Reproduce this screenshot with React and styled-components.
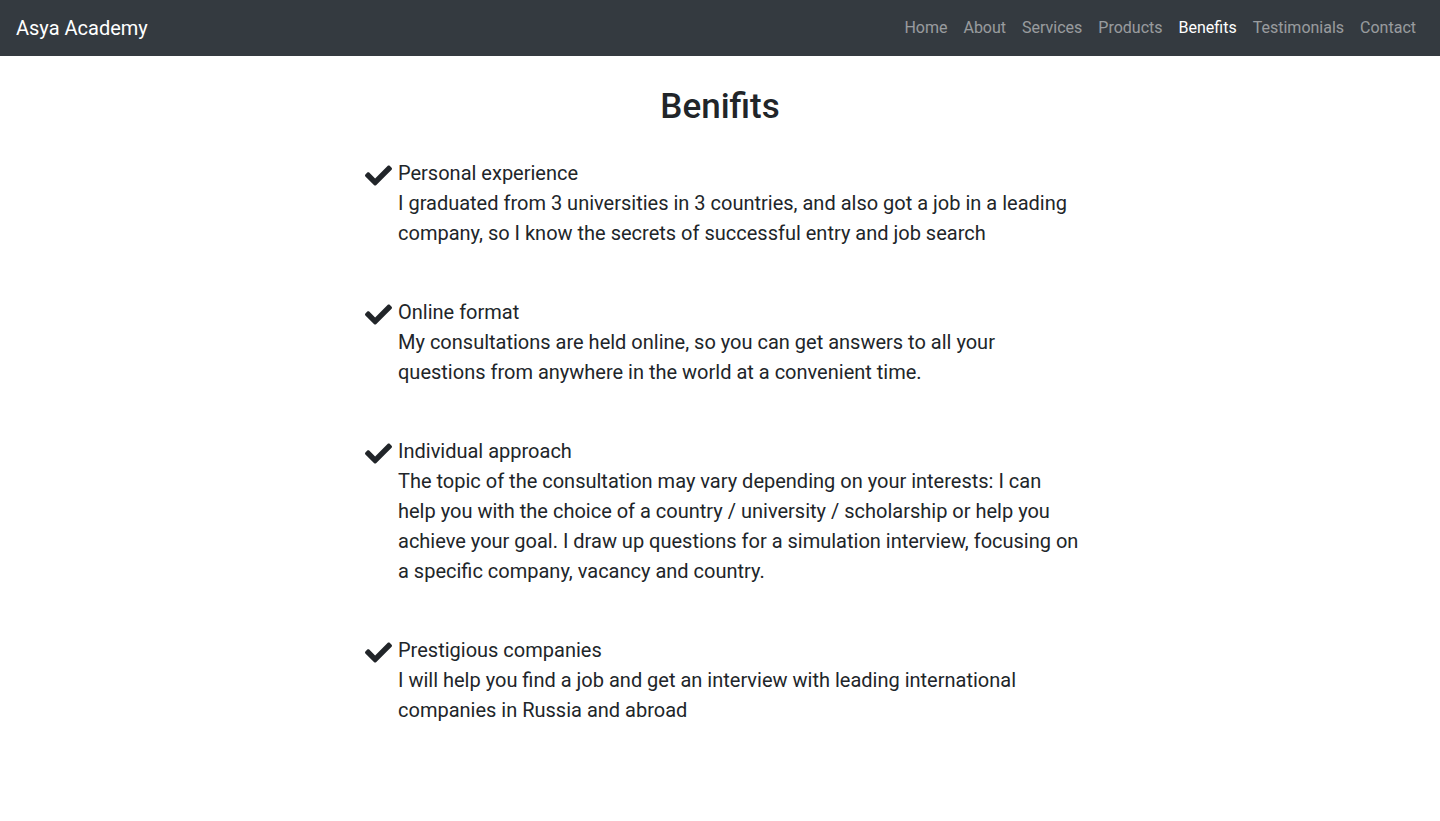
import React from 'react';
import styled, { createGlobalStyle } from 'styled-components';
import { FaCheck } from 'react-icons/fa';

const GlobalStyle = createGlobalStyle`
  * {
    box-sizing: border-box;
  }

  body {
    margin: 0;
    font-family: Roboto, "Liberation Sans", sans-serif;
    font-size: 16px;
    line-height: 1.5;
    color: #212529;
    background: #fff;
  }
`;

const Navbar = styled.nav`
  display: flex;
  align-items: center;
  justify-content: space-between;
  height: 56px;
  padding: 0 16px;
  background: #343a40;
`;

const Brand = styled.a`
  font-size: 20px;
  line-height: 30px;
  color: #fff;
  text-decoration: none;
`;

const NavList = styled.ul`
  display: flex;
  margin: 0;
  padding: 0;
  list-style: none;
`;

const NavLink = styled.a`
  display: block;
  padding: 8px;
  font-size: 16px;
  line-height: 24px;
  color: ${({ active }) => (active ? '#fff' : 'rgba(255, 255, 255, 0.5)')};
  text-decoration: none;
`;

const Section = styled.section`
  width: 720px;
  margin: 0 auto;
  padding-top: 30px;
`;

const Title = styled.h1`
  margin: 0 0 30px;
  font-size: 35px;
  font-weight: 500;
  line-height: 42px;
  text-align: center;
`;

const List = styled.ul`
  display: flex;
  flex-direction: column;
  gap: 49px;
  margin: 0;
  padding: 0;
  list-style: none;
`;

const Item = styled.li`
  display: flex;
  align-items: flex-start;
  gap: 6px;
  padding-left: 5px;
`;

const Check = styled(FaCheck)`
  flex: none;
  margin-top: 4px;
  color: #212529;
`;

const Text = styled.div`
  flex: 1;
  font-size: 20px;
  line-height: 30px;
`;

const links = ['Home', 'About', 'Services', 'Products', 'Benefits', 'Testimonials', 'Contact'];

const benefits = [
  {
    title: 'Personal experience',
    text: 'I graduated from 3 universities in 3 countries, and also got a job in a leading company, so I know the secrets of successful entry and job search',
  },
  {
    title: 'Online format',
    text: 'My consultations are held online, so you can get answers to all your questions from anywhere in the world at a convenient time.',
  },
  {
    title: 'Individual approach',
    text: 'The topic of the consultation may vary depending on your interests: I can help you with the choice of a country / university / scholarship or help you achieve your goal. I draw up questions for a simulation interview, focusing on a specific company, vacancy and country.',
  },
  {
    title: 'Prestigious companies',
    text: 'I will help you find a job and get an interview with leading international companies in Russia and abroad',
  },
];

const App = () => {
  return (
    <>
      <GlobalStyle />
      <Navbar>
        <Brand href="#">Asya Academy</Brand>
        <NavList>
          {links.map((link) => (
            <li key={link}>
              <NavLink href="#" active={link === 'Benefits'}>
                {link}
              </NavLink>
            </li>
          ))}
        </NavList>
      </Navbar>
      <Section>
        <Title>Benifits</Title>
        <List>
          {benefits.map((item) => (
            <Item key={item.title}>
              <Check size={27} />
              <Text>
                {item.title}
                <br />
                {item.text}
              </Text>
            </Item>
          ))}
        </List>
      </Section>
    </>
  );
};

export default App;
